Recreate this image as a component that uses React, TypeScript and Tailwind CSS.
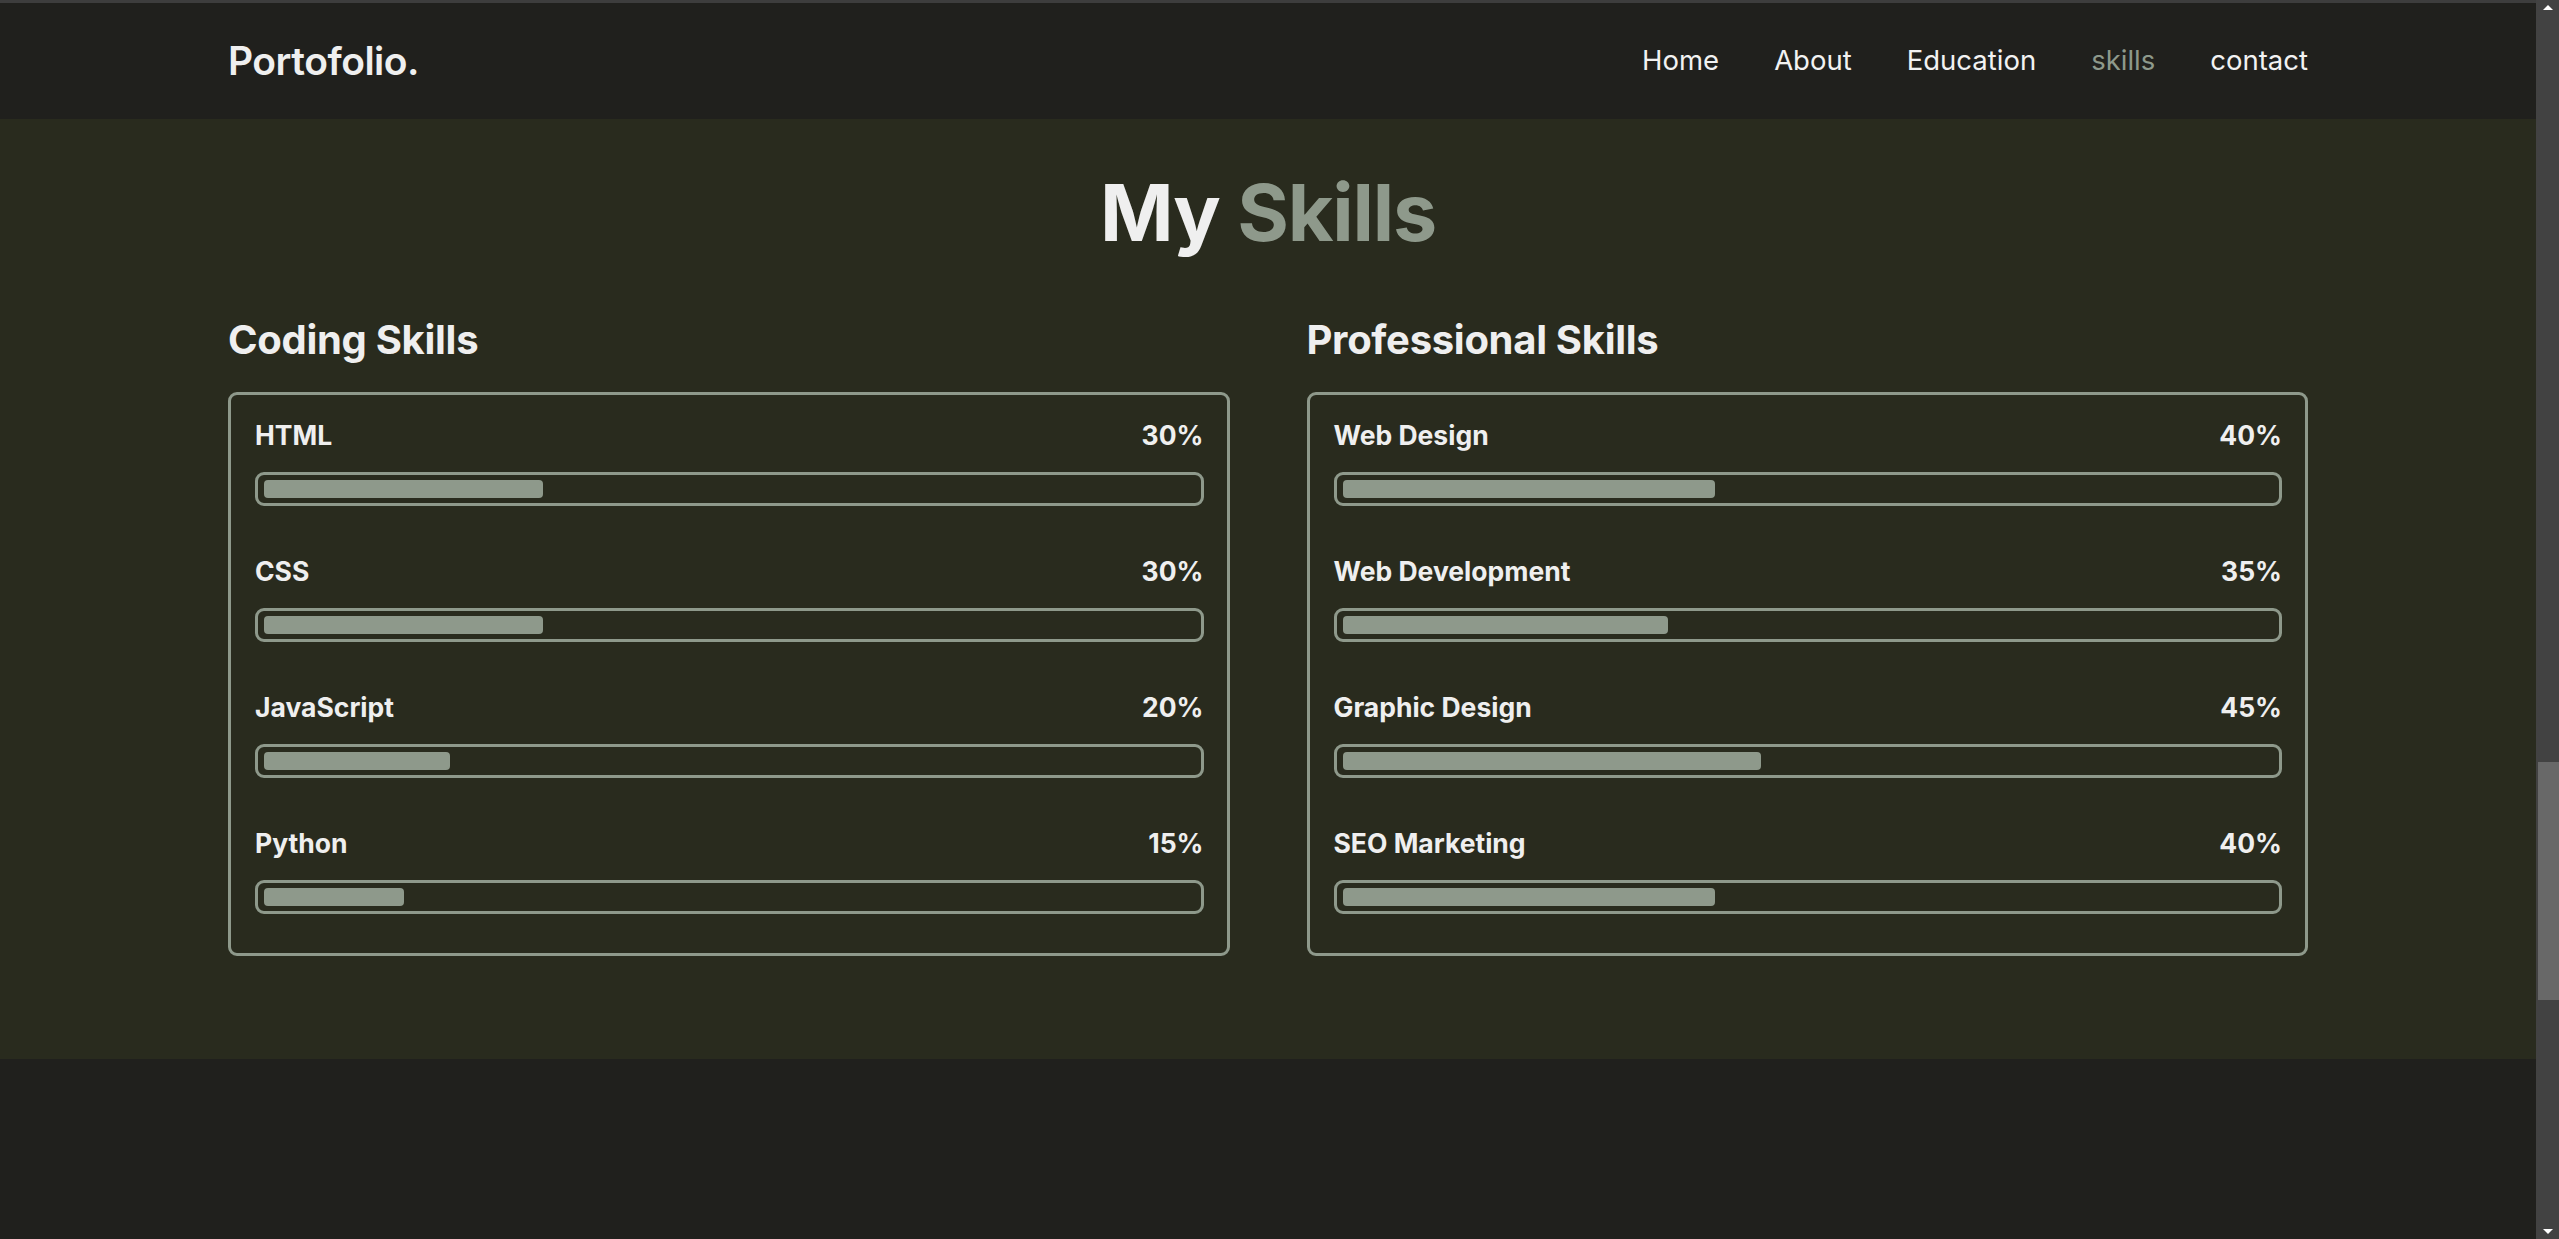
import React from 'react';

type Skill = { name: string; pct: number };

const CODING: Skill[] = [
  { name: 'HTML', pct: 30 },
  { name: 'CSS', pct: 30 },
  { name: 'JavaScript', pct: 20 },
  { name: 'Python', pct: 15 },
];

const PROFESSIONAL: Skill[] = [
  { name: 'Web Design', pct: 40 },
  { name: 'Web Development', pct: 35 },
  { name: 'Graphic Design', pct: 45 },
  { name: 'SEO Marketing', pct: 40 },
];

const NAV = ['Home', 'About', 'Education', 'skills', 'contact'];

const SkillBox: React.FC<{ title: string; items: Skill[] }> = ({ title, items }) => (
  <div className="flex flex-col">
    <h3 className="text-[40px] leading-[60px] font-bold tracking-[-0.3px] mb-[22px]">{title}</h3>
    <div className="border-[3px] border-[#8e998b] rounded-[9px] pl-6 pr-[23px] pt-[22px] pb-[39px] flex flex-col gap-[47px]">
      {items.map((s) => (
        <div key={s.name}>
          <div className="flex justify-between items-center h-[38px] text-[26.5px] font-bold">
            <span>{s.name}</span>
            <span>{s.pct}%</span>
          </div>
          <div className="mt-[17px] border-[3px] border-[#8e998b] rounded-[9px] py-[5px] px-[6px]">
            <div className="h-[18px] bg-[#8e998b] rounded-[4px]" style={{ width: `${s.pct}%` }} />
          </div>
        </div>
      ))}
    </div>
  </div>
);

export default function App() {
  return (
    <div className="flex h-[1239px] w-full overflow-hidden bg-[#20201d] text-[#efefef] font-['Inter',sans-serif]">
      <div className="flex-1 flex flex-col">
        <div className="h-[3px] bg-[#3d3d3d]" />
        {/* Header */}
        <header className="h-[116px] bg-[#20201d] px-[228px] flex items-center justify-between">
          <div className="text-[39px] font-semibold tracking-[-0.5px]">Portofolio.</div>
          <nav className="flex items-center gap-[55px] text-[27.5px]">
            {NAV.map((n) => (
              <a key={n} className={n === 'skills' ? 'text-[#8e998b]' : 'text-[#f2f2f2]'}>
                {n}
              </a>
            ))}
          </nav>
        </header>

        {/* Skills */}
        <section className="bg-[#292b1e] px-[228px] pt-[45px] pb-[103px]">
          <h2 className="text-center text-[79px] leading-[96px] font-bold tracking-[-1.2px]">
            My <span className="text-[#8e998b]">Skills</span>
          </h2>
          <div className="mt-[50px] grid grid-cols-2 gap-[77px]">
            <SkillBox title="Coding Skills" items={CODING} />
            <SkillBox title="Professional Skills" items={PROFESSIONAL} />
          </div>
        </section>

        <div className="flex-1 bg-[#20201d]" />
      </div>

      {/* scrollbar */}
      <div className="w-[23px] bg-[#424242] flex flex-col items-center">
        <div className="mt-[5px] w-0 h-0 border-l-[5px] border-r-[5px] border-b-[5px] border-l-transparent border-r-transparent border-b-white" />
        <div className="h-[752px]" />
        <div className="self-end w-[21px] h-[238px] bg-[#686868]" />
        <div className="flex-1" />
        <div className="mb-[5px] w-0 h-0 border-l-[5px] border-r-[5px] border-t-[5px] border-l-transparent border-r-transparent border-t-white" />
      </div>
    </div>
  );
}
